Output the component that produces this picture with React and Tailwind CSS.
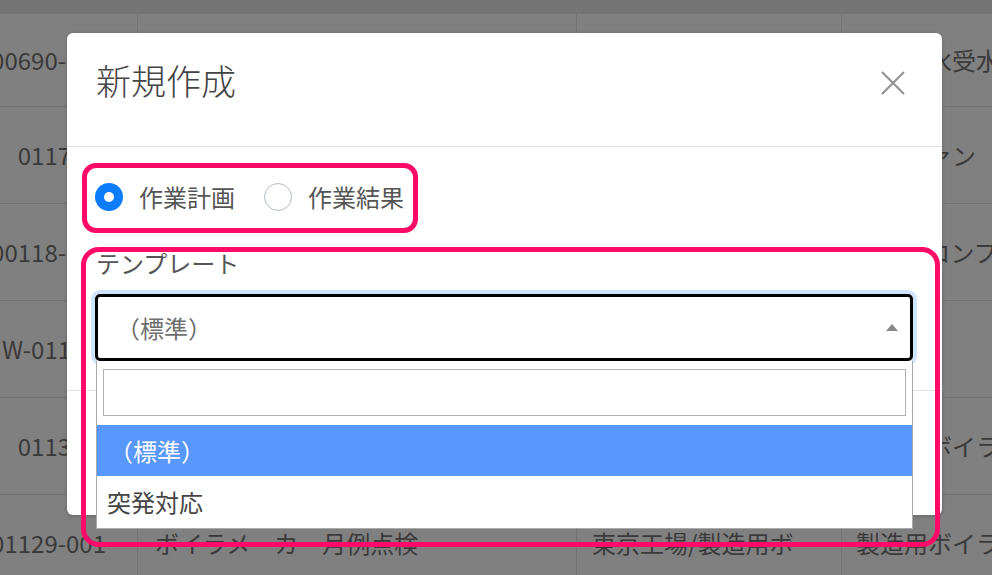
import { useState } from 'react'

const rows = [
  { no: '00690-001', name: '冷水ポンプ定期点検', place: '東京工場/給水設備', target: '工業用水受水槽', h: 'h-[93px]' },
  { no: '0117-01', name: '排気ファン月例点検', place: '東京工場/空調設備', target: '排気ファン', h: 'h-[97px]' },
  { no: '00118-001', name: 'コンプレッサー点検', place: '大阪工場/製造ライン', target: 'エアーコンプレッサー', h: 'h-[97px]' },
  { no: 'W-011-01', name: '配管漏れ確認', place: '大阪工場/配管設備', target: '配管', h: 'h-[97px]' },
  { no: '0113-01', name: 'ボイラ年次点検', place: '東京工場/製造用ボイラ室', target: '製造用ボイラ', h: 'h-[97px]' },
  { no: '01129-001', name: 'ボイラメーカー月例点検', place: '東京工場/製造用ボイラ室', target: '製造用ボイラ', h: 'h-[97px]' },
]

// background list, already dimmed by the modal backdrop
function BackgroundTable() {
  return (
    <div className="w-full">
      <div className="h-[14px] bg-[#747474]" />
      {rows.map((r) => (
        <div key={r.no} className={`grid grid-cols-[138px_439px_265px_1fr] border-b border-[#737373] text-[24px] text-[#3a3a3a] ${r.h}`}>
          <div className="flex items-center justify-end pr-[31px] border-r border-[#747474] whitespace-nowrap">{r.no}</div>
          <div className="flex items-center pl-[17px] border-r border-[#747474] whitespace-nowrap overflow-hidden">{r.name}</div>
          <div className="flex items-center pl-[15px] pr-[12px] border-r border-[#747474] min-w-0">
            <span className="truncate min-w-0">{r.place}</span>
          </div>
          <div className="flex items-center pl-[14px] whitespace-nowrap overflow-hidden">{r.target}</div>
        </div>
      ))}
    </div>
  )
}

function Radio({ checked, label, onClick }) {
  return (
    <button type="button" onClick={onClick} className="flex items-center gap-[16px]">
      {checked ? (
        <span className="w-[28px] h-[28px] rounded-full bg-[#0b7dfa] flex items-center justify-center">
          <span className="w-[10px] h-[10px] rounded-full bg-white" />
        </span>
      ) : (
        <span className="w-[28px] h-[28px] rounded-full border-[1.5px] border-[#b5bcc4] bg-white" />
      )}
      <span className="text-[24px] leading-[32px] text-[#555]">{label}</span>
    </button>
  )
}

export default function App() {
  const [kind, setKind] = useState('plan')

  return (
    <div className="relative w-[992px] h-[575px] overflow-hidden bg-[#808080] font-['Noto_Sans_CJK_JP','Noto_Sans',sans-serif]">
      <BackgroundTable />

      {/* Modal */}
      <div className="absolute left-[67px] top-[33px] w-[875px] h-[482px] bg-white rounded-[6px] shadow-[0_1px_4px_rgba(0,0,0,0.2)] flex flex-col">
        <div className="h-[114px] flex items-start justify-between pl-[29px] pr-[36px] pt-[29px] border-b border-[#dee2e6]">
          <h1 className="text-[35px] leading-[35px] font-light text-[#444]">新規作成</h1>
          <button type="button" className="w-[26px] h-[26px] mt-[8px]">
            <svg viewBox="0 0 26 26" className="w-[26px] h-[26px]" fill="none" stroke="#8f8f8f" strokeWidth="2">
              <path d="M2 2 L24 24 M24 2 L2 24" />
            </svg>
          </button>
        </div>

        <div className="px-[28px] pt-[36px] pb-[29px] border-b border-[#dee2e6]">
          <div className="flex items-center gap-[29px] h-[28px]">
            <Radio checked={kind === 'plan'} label="作業計画" onClick={() => setKind('plan')} />
            <Radio checked={kind === 'result'} label="作業結果" onClick={() => setKind('result')} />
          </div>

          <div className="mt-[36px]">
            <div className="text-[24px] leading-[32px] text-[#555] pl-[1px]">テンプレート</div>
            <div className="relative mt-[15px] mr-[1px]">
              <div className="h-[67px] border-[3px] border-black rounded-[5px] shadow-[0_0_0_4px_#cfe4fd] flex items-center justify-between pl-[18px] pr-[12px]">
                <span className="text-[24px] text-[#6e6e6e]">（標準）</span>
                <svg viewBox="0 0 12 7" className="w-[12px] h-[7px]">
                  <path d="M0 7 L6 0 L12 7 Z" fill="#888" />
                </svg>
              </div>

              {/* open dropdown */}
              <div className="absolute left-[1px] right-0 top-[67px] z-10 bg-white border border-[#aaa] border-t-0">
                <div className="pt-[8px] pb-[9px] px-[6px]">
                  <div className="h-[47px] border-[1.5px] border-[#b0b0b0]" />
                </div>
                <div className="h-[51px] bg-[#5897fb] text-white text-[24px] flex items-center pl-[12px]">（標準）</div>
                <div className="h-[52px] text-[#444] text-[24px] flex items-center pl-[10px]">突発対応</div>
              </div>
            </div>
          </div>
        </div>
        <div className="flex-1" />
      </div>

      {/* annotation frames */}
      <div className="absolute left-[82px] top-[163px] w-[336px] h-[70px] border-[5px] border-[#ff0a68] rounded-[14px] pointer-events-none" />
      <div className="absolute left-[81px] top-[247px] w-[859px] h-[300px] border-[5px] border-[#ff0a68] rounded-[18px] pointer-events-none z-20" />
    </div>
  )
}
